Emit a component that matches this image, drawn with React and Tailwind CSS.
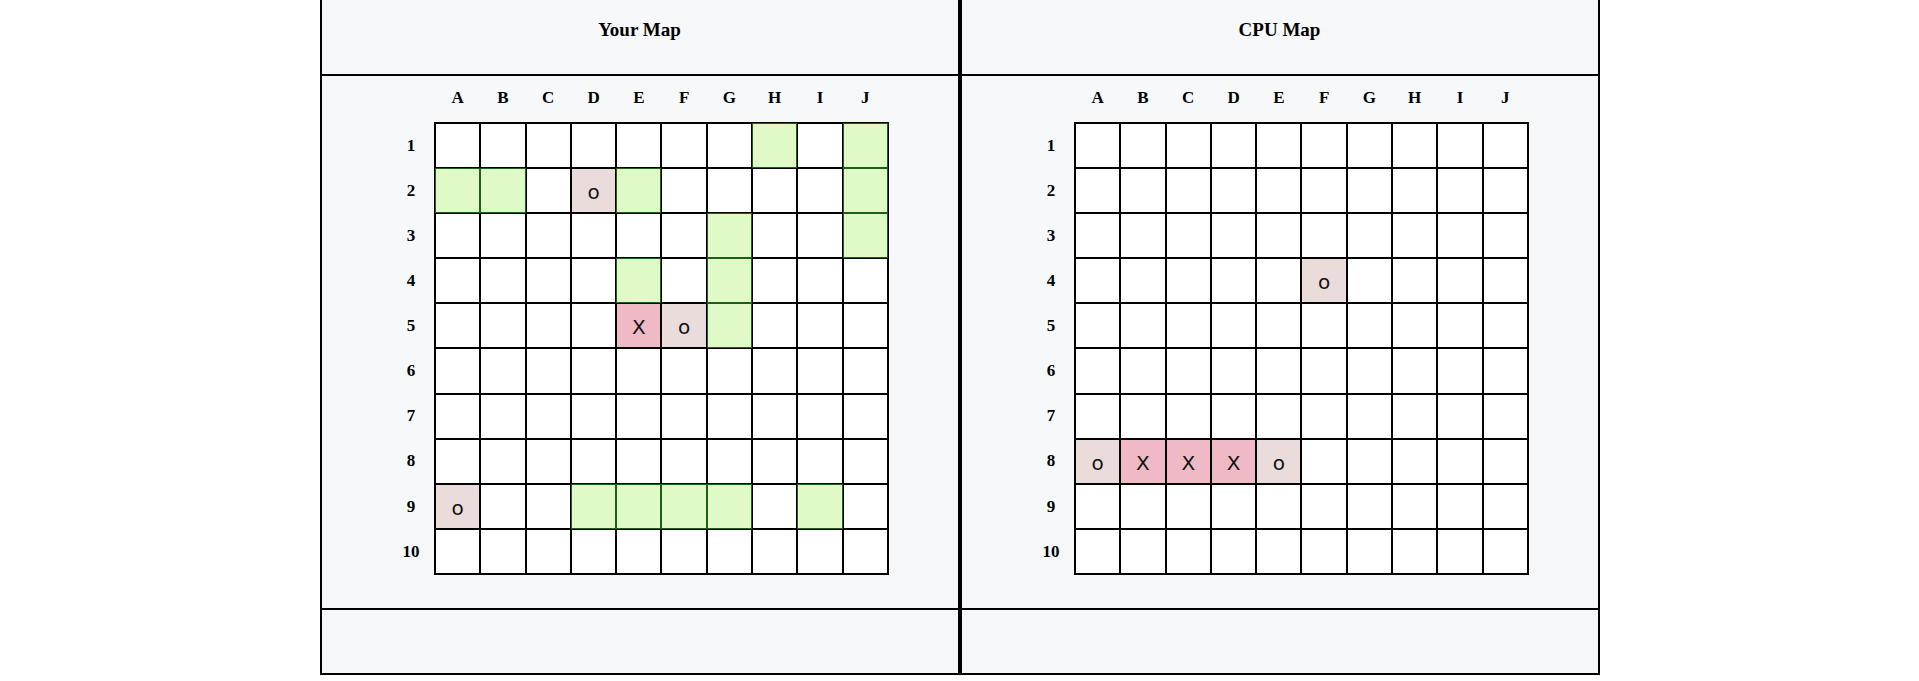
import React from 'react';

const COLS = ['A', 'B', 'C', 'D', 'E', 'F', 'G', 'H', 'I', 'J'];
const ROWS = [1, 2, 3, 4, 5, 6, 7, 8, 9, 10];

// s = ship, x = hit, o = miss
const playerBoard = {
  H1: 's', J1: 's',
  A2: 's', B2: 's', D2: 'o', E2: 's', J2: 's',
  G3: 's', J3: 's',
  E4: 's', G4: 's',
  E5: 'x', F5: 'o', G5: 's',
  A9: 'o', D9: 's', E9: 's', F9: 's', G9: 's', I9: 's',
};

const cpuBoard = {
  F4: 'o',
  A8: 'o', B8: 'x', C8: 'x', D8: 'x', E8: 'o',
};

function Cell({ state }) {
  let cls = 'bg-white border-black';
  if (state === 's') cls = 'bg-[#dffac6] border-[#1d5f16]';
  if (state === 'x') cls = 'bg-[#efb9c6] border-black';
  if (state === 'o') cls = 'bg-[#ebdcdc] border-black';
  return (
    <div className={`border flex items-center justify-center pt-[3px] text-[20px] text-[#111] ${cls}`}>
      {state === 'x' ? 'X' : state === 'o' ? 'o' : ''}
    </div>
  );
}

function Board({ title, board }) {
  return (
    <div className="flex flex-col border-x-2 border-b-2 border-black bg-[#f6f8fa]">
      <div className="h-[76px] border-b-2 border-black pt-[18px] text-center">
        <h2 className="text-[19px] leading-[24px] font-bold font-['Liberation_Serif',serif]">{title}</h2>
      </div>

      <div className="h-[532px] flex flex-col items-center pt-[10px]">
        <div className="flex flex-col">
          <div className="flex h-[24px] mb-[12px] pl-[45px] pr-[1px] text-[17px] leading-[24px] font-bold font-['Liberation_Serif',serif]">
            {COLS.map((c) => (
              <div key={c} className="flex-1 text-center">{c}</div>
            ))}
          </div>
          <div className="flex">
            <div className="w-[44px] flex flex-col pt-[1px] text-[17px] font-bold font-['Liberation_Serif',serif]">
              {ROWS.map((r) => (
                <div key={r} className="h-[45.1px] flex items-center justify-center pr-[2px]">{r}</div>
              ))}
            </div>
            <div className="w-[455px] h-[453px] grid grid-cols-10 grid-rows-10 border border-black font-['DejaVu_Sans',sans-serif]">
              {ROWS.map((r) =>
                COLS.map((c) => <Cell key={c + r} state={board[c + r]} />)
              )}
            </div>
          </div>
        </div>
      </div>

      <div className="h-[65px] border-t-2 border-black"></div>
    </div>
  );
}

export default function App() {
  return (
    <div className="min-h-[681px] bg-white text-black">
      <div className="max-w-[1280px] mx-auto grid grid-cols-2">
        <Board title="Your Map" board={playerBoard} />
        <Board title="CPU Map" board={cpuBoard} />
      </div>
    </div>
  );
}
